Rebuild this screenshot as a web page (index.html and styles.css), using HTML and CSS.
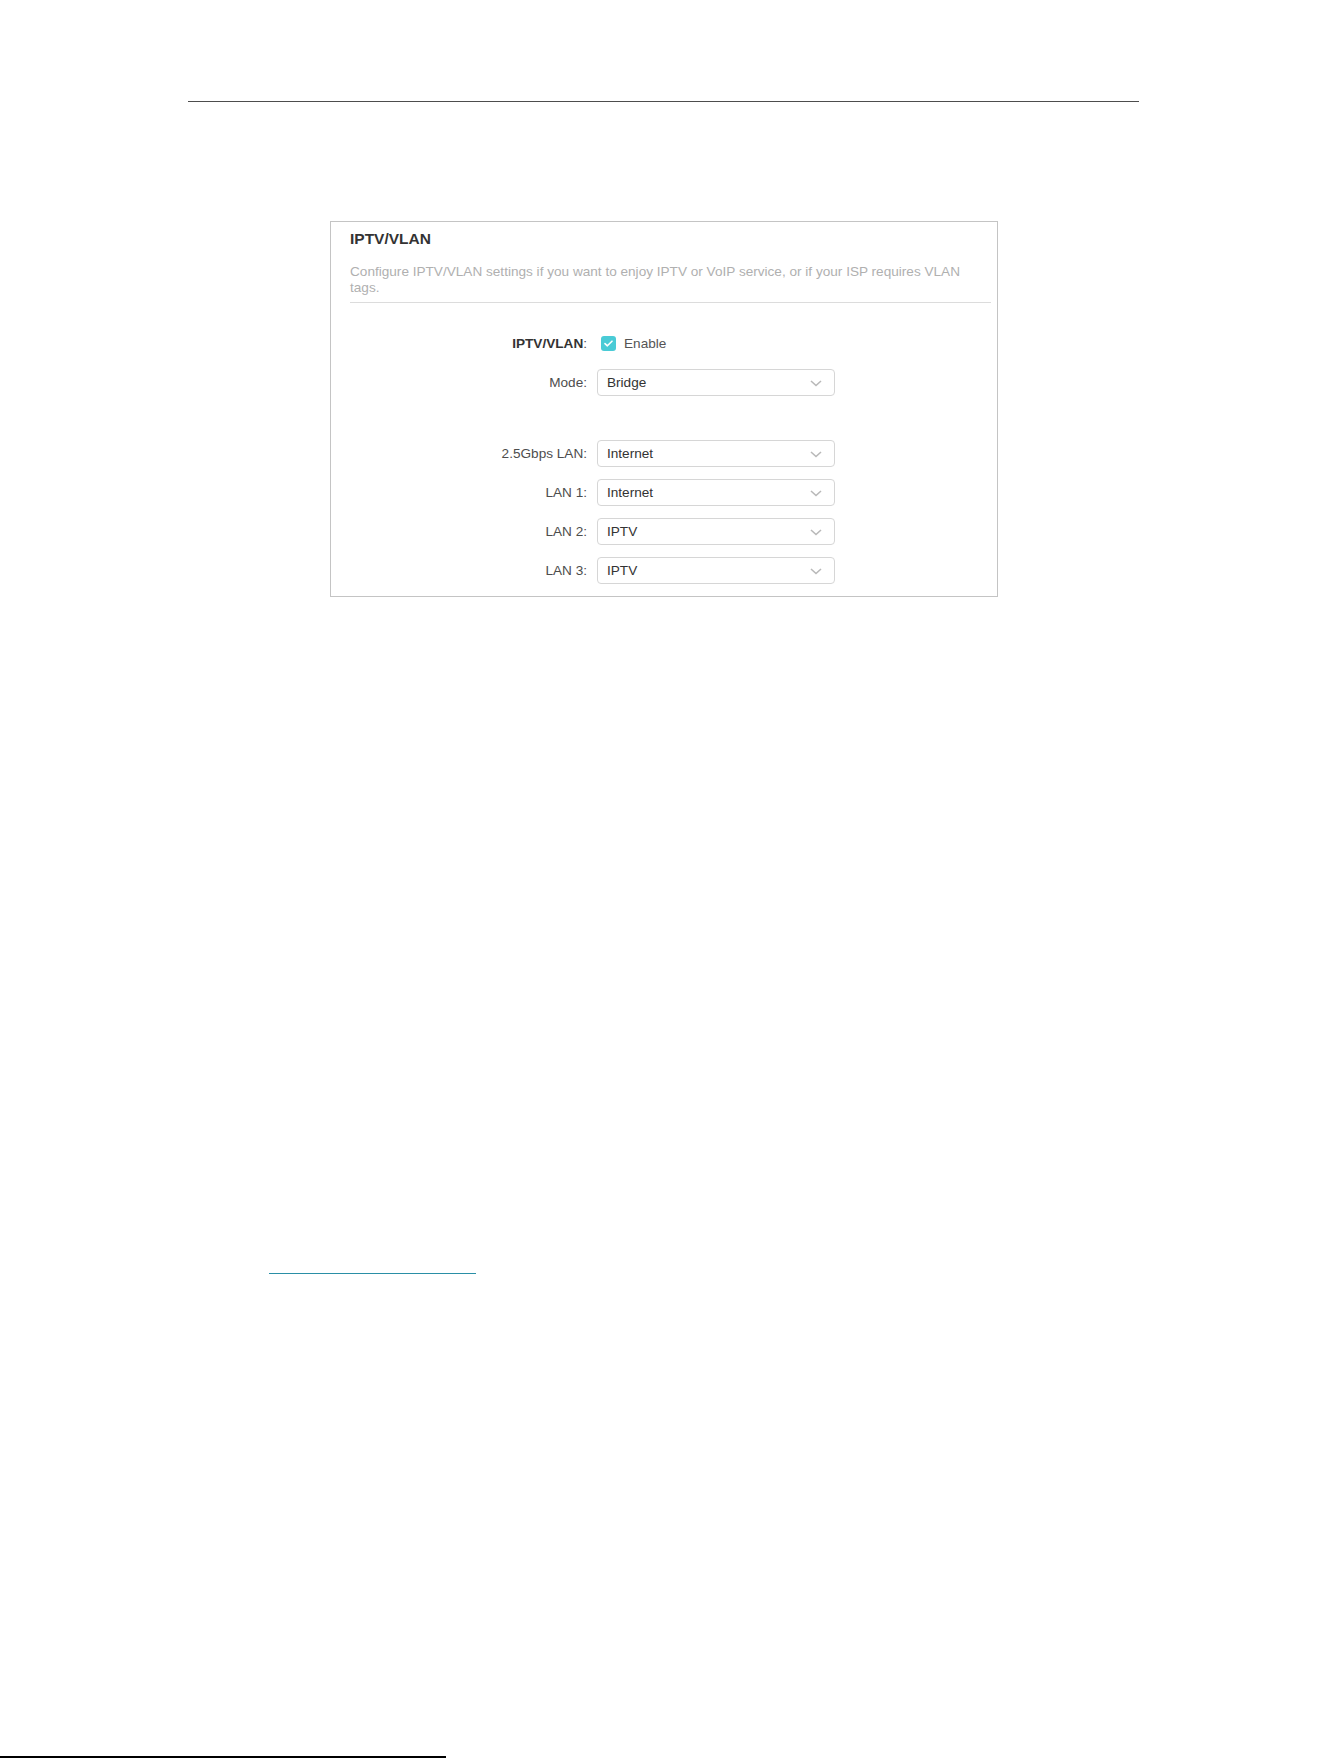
FILE: index.html
```html
<!DOCTYPE html>
<html lang="en">
<head>
    <meta charset="UTF-8">
    <title>IPTV/VLAN</title>
    <link rel="stylesheet" href="styles.css">
</head>
<body>

<div class="page">
    <div class="top-rule"></div>

    <div class="panel">
        <h3 class="panel-title">IPTV/VLAN</h3>
        <p class="panel-desc">Configure IPTV/VLAN settings if you want to enjoy IPTV or VoIP service, or if your ISP requires VLAN tags.</p>

        <div class="form">
            <div class="row">
                <label class="row-label"><b>IPTV/VLAN</b>:</label>
                <div class="row-field">
                    <span class="checkbox">
                        <svg width="9" height="7" viewBox="0 0 9 7"><path d="M1 3.6 L3.4 5.8 L8 1.2" fill="none" stroke="#fff" stroke-width="1.6" stroke-linecap="round" stroke-linejoin="round"/></svg>
                    </span>
                    <span class="check-text">Enable</span>
                </div>
            </div>
            <div class="row">
                <label class="row-label">Mode:</label>
                <div class="select">Bridge<svg class="chevron" width="12" height="7" viewBox="0 0 12 7"><path d="M1 1 L6 5.5 L11 1" fill="none" stroke="#b9b9b9" stroke-width="1.6"/></svg></div>
            </div>

            <div class="row row-gap">
                <label class="row-label">2.5Gbps LAN:</label>
                <div class="select">Internet<svg class="chevron" width="12" height="7" viewBox="0 0 12 7"><path d="M1 1 L6 5.5 L11 1" fill="none" stroke="#b9b9b9" stroke-width="1.6"/></svg></div>
            </div>
            <div class="row">
                <label class="row-label">LAN 1:</label>
                <div class="select">Internet<svg class="chevron" width="12" height="7" viewBox="0 0 12 7"><path d="M1 1 L6 5.5 L11 1" fill="none" stroke="#b9b9b9" stroke-width="1.6"/></svg></div>
            </div>
            <div class="row">
                <label class="row-label">LAN 2:</label>
                <div class="select">IPTV<svg class="chevron" width="12" height="7" viewBox="0 0 12 7"><path d="M1 1 L6 5.5 L11 1" fill="none" stroke="#b9b9b9" stroke-width="1.6"/></svg></div>
            </div>
            <div class="row">
                <label class="row-label">LAN 3:</label>
                <div class="select">IPTV<svg class="chevron" width="12" height="7" viewBox="0 0 12 7"><path d="M1 1 L6 5.5 L11 1" fill="none" stroke="#b9b9b9" stroke-width="1.6"/></svg></div>
            </div>
        </div>
    </div>

    <a class="doc-link" href="#"></a>

    <div class="bottom-rule"></div>
</div>

</body>
</html>
```

FILE: styles.css
```css
html, body {
    margin: 0;
    padding: 0;
    background: #fff;
    overflow: hidden;
}

.page {
    height: 1758px;
    font-family: "Liberation Sans", Arial, sans-serif;
    padding-top: 101px;
    box-sizing: border-box;
}

.top-rule {
    margin-left: 188px;
    width: 951px;
    border-top: 1px solid #4d4d4d;
}

/* IPTV/VLAN panel */
.panel {
    margin: 119px 0 0 330px;
    width: 668px;
    height: 376px;
    box-sizing: border-box;
    border: 1px solid #c4c4c4;
    padding: 7px 6px 0 19px;
}

.panel-title {
    margin: 0;
    font-size: 15.5px;
    line-height: 20px;
    font-weight: bold;
    color: #333;
}

.panel-desc {
    margin: 15px 0 0;
    padding-bottom: 6px;
    font-size: 13.6px;
    line-height: 16px;
    color: #b0b0b0;
    border-bottom: 1px solid #dcdcdc;
}

.form {
    padding-top: 27px;
}

.row {
    display: flex;
    align-items: center;
    height: 27px;
    margin-bottom: 12px;
}

/* extra space between the mode and the port list */
.row-gap {
    margin-top: 44px;
}

.row-label {
    width: 237px;
    padding-right: 10px;
    text-align: right;
    font-size: 13.6px;
    color: #4d4d4d;
}

.row-label b {
    color: #333;
}

.row-field {
    display: flex;
    align-items: center;
}

.checkbox {
    display: flex;
    align-items: center;
    justify-content: center;
    width: 15px;
    height: 15px;
    margin-left: 4px;
    border-radius: 3px;
    background: #4acbd6;
}

.check-text {
    margin-left: 8px;
    font-size: 13.6px;
    color: #555;
}

.select {
    position: relative;
    width: 238px;
    height: 27px;
    box-sizing: border-box;
    border: 1px solid #d6d6d6;
    border-radius: 4px;
    padding-left: 9px;
    font-size: 13.6px;
    line-height: 25px;
    color: #333;
}

.chevron {
    position: absolute;
    right: 12px;
    top: 10px;
}

.doc-link {
    display: block;
    margin: 676px 0 0 269px;
    width: 207px;
    height: 1px;
    background: #2a8fa6;
}

.bottom-rule {
    margin-top: 482px;
    width: 446px;
    height: 2px;
    background: #000;
}
```
